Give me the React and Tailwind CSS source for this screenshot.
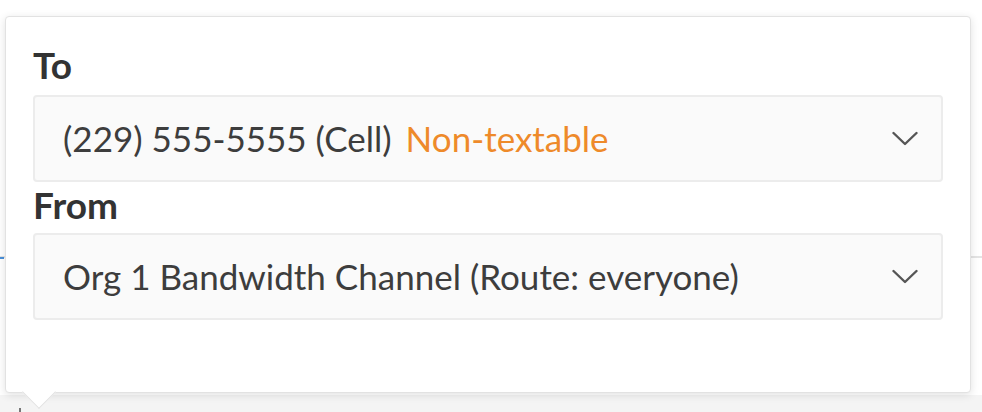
import React from 'react';

const Chevron = () => (
  <svg width="26" height="16" viewBox="0 0 26 16" fill="none" className="shrink-0">
    <polyline points="1.5,2 13,13 24.5,2" stroke="#555" strokeWidth="2.4" strokeLinecap="round" strokeLinejoin="round" />
  </svg>
);

function SelectBox({ children }) {
  return (
    <div className="flex h-[87px] items-center justify-between rounded-[4px] border-2 border-[#ececec] bg-[#fafafa] pl-[28px] pr-[23px]">
      <div className="flex items-center text-[35px] leading-none text-[#3d3d3d]">{children}</div>
      <Chevron />
    </div>
  );
}

export default function App() {
  return (
    <div className="relative h-[412px] w-[982px] overflow-hidden bg-white" style={{ fontFamily: 'Lato, "Open Sans", sans-serif' }}>
      {/* page behind the popover */}
      <div className="flex h-full flex-col">
        <div className="h-[258px] border-b-2 border-[#e4e4e4]" />
        <div className="h-[137px]" />
        <div className="flex-1 bg-[#f4f4f4]" />
      </div>
      <div className="absolute left-0 top-[257px] h-[2px] w-[4px] bg-[#4a90d9]" />
      <div className="absolute left-[19px] top-[408px] h-[4px] w-[2px] bg-[#777]" />

      {/* popover */}
      <div className="absolute left-[5px] top-[16px] h-[377px] w-[966px] rounded-[4px] border border-[#e2e2e2] bg-white px-[27px] pt-[28px] shadow-[0_2px_8px_rgba(0,0,0,0.12)]">
        <div className="flex flex-col">
          <label className="mb-[10px] text-[37px] font-bold leading-[40px] text-[#333]">To</label>
          <SelectBox>
            <span>(229) 555-5555 (Cell)</span>
            <span className="ml-[14px] text-[#ee8a2a]">Non-textable</span>
          </SelectBox>
          <label className="mb-[8px] mt-[3px] text-[37px] font-bold leading-[40px] text-[#333]">From</label>
          <SelectBox>
            <span>Org 1 Bandwidth Channel (Route: everyone)</span>
          </SelectBox>
        </div>
        {/* arrow */}
        <div className="absolute -bottom-[12px] left-[21px] h-[24px] w-[24px] rotate-45 border-b border-r border-[#e2e2e2] bg-white" />
      </div>
    </div>
  );
}
